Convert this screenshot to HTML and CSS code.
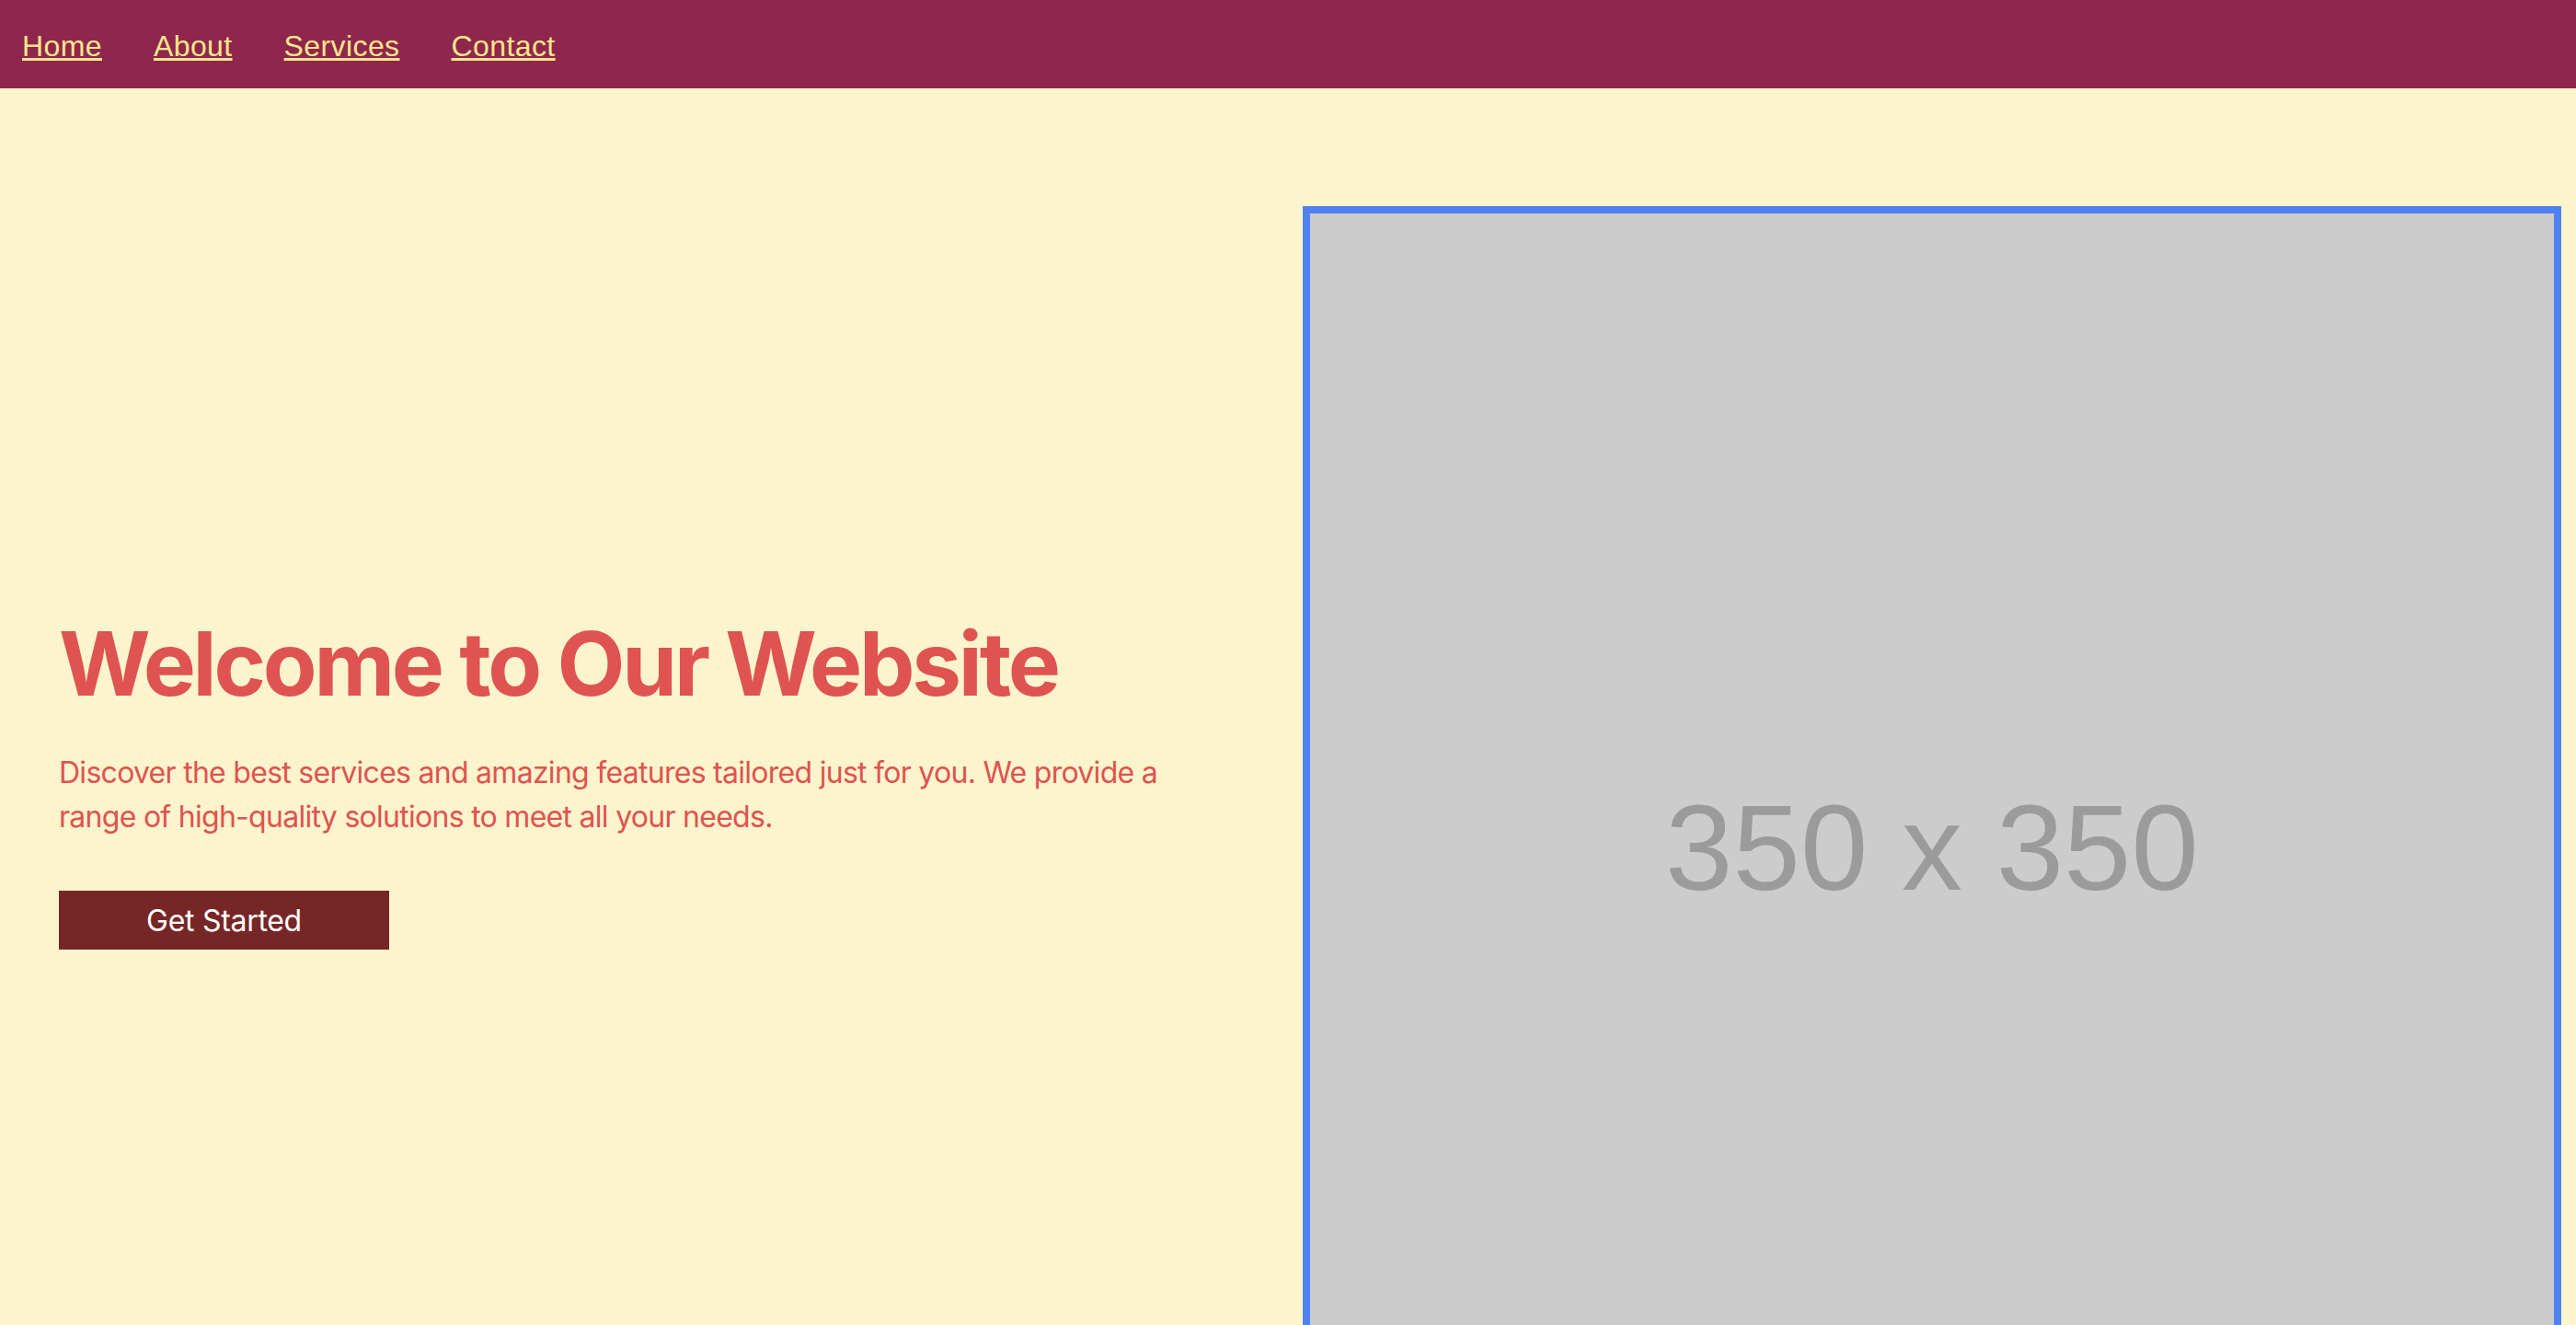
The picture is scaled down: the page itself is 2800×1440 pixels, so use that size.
FILE: index.html
```html
<!DOCTYPE html>
<html lang="en">
<head>
<meta charset="utf-8">
<title>Welcome</title>
<link rel="stylesheet" href="styles.css">
</head>
<body>
<nav class="topnav">
  <a class="nav-link" href="#">Home</a>
  <a class="nav-link" href="#">About</a>
  <a class="nav-link" href="#">Services</a>
  <a class="nav-link" href="#">Contact</a>
</nav>
<main class="hero">
  <section class="hero-text">
    <h1 class="hero-title">Welcome to Our Website</h1>
    <p class="hero-lead">Discover the best services and amazing features tailored just for you. We provide a range of high-quality solutions to meet all your needs.</p>
    <button class="hero-button" type="button">Get Started</button>
  </section>
  <section class="hero-media">
    <div class="placeholder"><span class="placeholder-label">350 x 350</span></div>
  </section>
</main>
</body>
</html>
```

FILE: styles.css
```css
html, body {
  margin: 0;
  padding: 0;
}

body {
  background: #fcf4cd;
  font-family: Inter, "Noto Sans", sans-serif;
  overflow: hidden;
}

.topnav {
  height: 96px;
  box-sizing: border-box;
  padding: 4px 0 0 24px;
  background: #8f264e;
  display: flex;
  align-items: center;
  gap: 56px;
}

.nav-link {
  font-family: "Liberation Sans", Arial, sans-serif;
  font-size: 32px;
  letter-spacing: 0.4px;
  color: #fde68a;
  text-decoration: underline;
  text-decoration-thickness: 3px;
  text-underline-offset: 2px;
}

.hero {
  display: grid;
  grid-template-columns: 1384px 1384px;
  padding: 128px 16px 0 16px;
}

.hero-text {
  padding: 440px 64px 0 48px;
  color: #df5350;
}

.hero-title {
  margin: 0 0 37px 0;
  font-size: 96px;
  line-height: 1.2;
  font-weight: 700;
  letter-spacing: -3.2px;
  color: #df5350;
}

.hero-lead {
  margin: 0 0 56px 0;
  font-size: 32px;
  line-height: 48px;
  letter-spacing: -0.72px;
  color: #df5350;
}

.hero-button {
  display: block;
  width: 359px;
  height: 64px;
  border: none;
  border-radius: 0;
  padding: 0;
  background: #772626;
  color: #ffffff;
  font-family: Inter, "Noto Sans", sans-serif;
  font-size: 32px;
  letter-spacing: -0.3px;
  cursor: pointer;
}

.hero-media {
  padding-left: 16px;
}

.placeholder {
  width: 1368px;
  height: 1368px;
  box-sizing: border-box;
  border: 8px solid #4f81ef;
  background: #cccccc;
  display: flex;
  align-items: center;
  justify-content: center;
  padding-top: 26px;
}

.placeholder-label {
  font-family: "Liberation Sans", Arial, sans-serif;
  font-size: 132px;
  color: #9b9b9b;
}
```
